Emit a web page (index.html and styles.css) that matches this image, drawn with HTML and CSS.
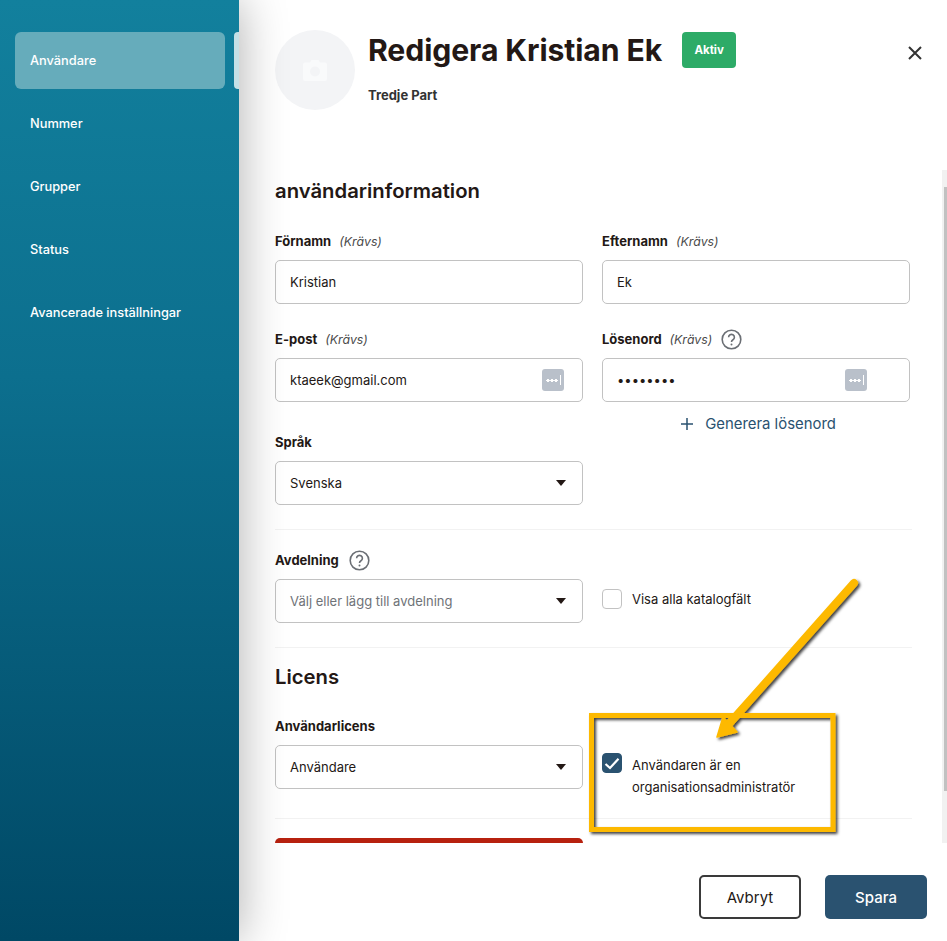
FILE: index.html
```html
<!DOCTYPE html>
<html lang="sv">
<head>
<meta charset="utf-8">
<title>Redigera Kristian Ek</title>
<link rel="stylesheet" href="styles.css">
</head>
<body>
<div class="app">
  <nav class="sidebar">
    <div class="nav-first">
      <a class="nav-item active">Användare</a>
      <span class="nav-peek"></span>
    </div>
    <a class="nav-item">Nummer</a>
    <a class="nav-item">Grupper</a>
    <a class="nav-item">Status</a>
    <a class="nav-item">Avancerade inställningar</a>
  </nav>
  <main class="panel">
    <header class="head">
      <div class="avatar">
        <svg width="24" height="21" viewBox="0 0 24 21"><path class="cam" fill-rule="evenodd" d="M7 2.5 8.5 0h7L17 2.500h5a2 2 0 0 1 2 2V19a2 2 0 0 1-2 2H2a2 2 0 0 1-2-2V4.500a2 2 0 0 1 2-2zM12 6.500a5 5 0 1 0 0 10 5 5 0 0 0 0-10z"/></svg>
      </div>
      <div class="head-text">
        <div class="title-row">
          <h1>Redigera Kristian Ek</h1>
          <span class="badge">Aktiv</span>
        </div>
        <div class="subtitle">Tredje Part</div>
      </div>
      <button class="close" aria-label="Stäng">
        <svg width="14" height="14" viewBox="0 0 14 14"><path d="M1 1 13 13M13 1 1 13" stroke="#333" stroke-width="2" fill="none"/></svg>
      </button>
    </header>

    <section class="scroll">
      <h2 class="h-info">användarinformation</h2>
      <div class="grid">
        <div class="field">
          <div class="label"><b>Förnamn</b><i>(Krävs)</i></div>
          <div class="input">Kristian</div>
        </div>
        <div class="field">
          <div class="label"><b>Efternamn</b><i>(Krävs)</i></div>
          <div class="input">Ek</div>
        </div>
        <div class="field">
          <div class="label"><b>E-post</b><i>(Krävs)</i></div>
          <div class="input has-key">ktaeek@gmail.com
            <span class="key"><span class="dots"></span><span class="bar"></span></span>
          </div>
        </div>
        <div class="field">
          <div class="label"><b>Lösenord</b><i>(Krävs)</i>
            <svg class="help" width="21" height="21" viewBox="0 0 21 21"><circle cx="10.500" cy="10.500" r="9.300" fill="none" stroke="#6b6f75" stroke-width="1.600"/><path d="M7.600 8.300a2.900 2.900 0 1 1 4.400 2.500c-1 .6-1.500 1.100-1.500 2.300" fill="none" stroke="#6b6f75" stroke-width="1.600"/><circle cx="10.500" cy="15.500" r="1" fill="#6b6f75"/></svg>
          </div>
          <div class="input has-key pw">••••••••
            <span class="key key-pw"><span class="dots"></span><span class="bar"></span></span>
          </div>
          <a class="gen"><svg width="12" height="12" viewBox="0 0 12 12"><path d="M6 0V12M0 6H12" stroke="#2a5270" stroke-width="1.500"/></svg>Generera lösenord</a>
        </div>
      </div>

      <div class="grid lang">
        <div class="field">
          <div class="label"><b>Språk</b></div>
          <div class="input select">Svenska<span class="caret"></span></div>
        </div>
      </div>

      <hr class="sep sep-a">

      <div class="grid">
        <div class="field">
          <div class="label"><b>Avdelning</b>
            <svg class="help help-dept" width="21" height="21" viewBox="0 0 21 21"><circle cx="10.500" cy="10.500" r="9.300" fill="none" stroke="#6b6f75" stroke-width="1.600"/><path d="M7.600 8.300a2.900 2.900 0 1 1 4.400 2.500c-1 .6-1.500 1.100-1.500 2.300" fill="none" stroke="#6b6f75" stroke-width="1.600"/><circle cx="10.500" cy="15.500" r="1" fill="#6b6f75"/></svg>
          </div>
          <div class="input select placeholder">Välj eller lägg till avdelning<span class="caret"></span></div>
        </div>
        <label class="check check-dept">
          <span class="box"></span>
          <span class="check-text">Visa alla katalogfält</span>
        </label>
      </div>

      <hr class="sep sep-b">

      <h2 class="h-lic">Licens</h2>
      <div class="grid">
        <div class="field">
          <div class="label"><b>Användarlicens</b></div>
          <div class="input select">Användare<span class="caret"></span></div>
        </div>
        <label class="check check-admin">
          <span class="box on">
            <svg width="16" height="13" viewBox="0 0 16 13"><path d="M1.500 7 6 11 14.500 1.800" fill="none" stroke="#fff" stroke-width="2.200"/></svg>
          </span>
          <span class="check-text">Användaren är en<br>organisationsadministratör</span>
        </label>
      </div>

      <hr class="sep sep-c">
      <div class="danger"></div>

      <div class="track"><div class="thumb"></div></div>
    </section>

    <footer class="foot">
      <button class="btn ghost">Avbryt</button>
      <button class="btn primary">Spara</button>
    </footer>
  </main>

  <svg class="annot" width="947" height="941" viewBox="0 0 947 941">
    <defs>
      <filter id="sh" x="-10%" y="-10%" width="125%" height="125%">
        <feDropShadow dx="2" dy="2" stdDeviation="1.500" flood-color="#000" flood-opacity=".75"/>
      </filter>
    </defs>
    <g filter="url(#sh)">
      <rect x="591.500" y="715.500" width="241.500" height="114" fill="none" stroke="#fdb900" stroke-width="5"/>
      <path d="M854 583 728 725" stroke="#fdb900" stroke-width="8" stroke-linecap="round" fill="none"/>
      <path d="M717 737 723 717 737 732z" fill="#fdb900" stroke="#fdb900" stroke-width="1.500" stroke-linejoin="round"/>
    </g>
  </svg>
</div>
</body>
</html>
```

FILE: styles.css
```css
* { box-sizing: border-box; }
html, body { margin: 0; height: 100%; }
body {
  font-family: Inter, "Liberation Sans", sans-serif;
  color: #231815;
  background: #fff;
  overflow: hidden;
}
.app { position: relative; display: flex; width: 947px; height: 941px; overflow: hidden; }

/* Sidebar */
.sidebar {
  position: relative;
  z-index: 1;
  flex: 0 0 239px;
  width: 239px;
  padding: 32px 0 0 15px;
  display: flex;
  flex-direction: column;
  gap: 6px;
  background: linear-gradient(180deg, #12809d 0%, #0c6f8e 40%, #004865 100%);
  box-shadow: 0 0 45px rgba(0, 0, 0, .32);
}
.nav-first { display: flex; gap: 9px; width: 224px; }
.nav-item {
  flex: 0 0 57px;
  width: 210px;
  height: 57px;
  padding: 0 0 1px 15px;
  display: flex;
  align-items: center;
  color: #fff;
  font-size: 12.800px;
  font-weight: 500;
  border-radius: 6px;
}
.nav-item.active { background: #66acbb; flex: 0 0 210px; }
.nav-peek { flex: 0 0 5px; height: 57px; background: #c4e0e6; border-radius: 4px 0 0 4px; }

/* Panel */
.panel { flex: 1; min-width: 0; display: flex; flex-direction: column; background: #fff; }
.head { position: relative; height: 170px; flex: none; padding: 30px 0 0 36px; display: flex; gap: 13px; }
.avatar {
  width: 80px; height: 80px; border-radius: 50%;
  background: #f3f4f6;
  display: flex; align-items: center; justify-content: center;
}
.cam { fill: #f9fafb; }
.head-text { display: flex; flex-direction: column; }
.title-row { display: flex; align-items: flex-start; gap: 20px; padding-top: 2px; }
h1 { margin: 0; font-size: 30.200px; line-height: 36px; font-weight: 700; letter-spacing: -.1px; }
.badge {
  width: 54px; height: 36px;
  display: flex; align-items: center; justify-content: center;
  background: #2dab67; color: #fff;
  font-size: 11.500px; font-weight: 700;
  border-radius: 4px;
}
.subtitle { margin-top: 18px; font-size: 13px; line-height: 18px; font-weight: 700; color: #333; }
.close { position: absolute; left: 669px; top: 46px; width: 14px; height: 14px; padding: 0; border: 0; background: none; display: flex; }

.scroll { position: relative; flex: 1; min-height: 0; overflow: hidden; padding: 8px 37px 0 36px; }
h2 { margin: 0; font-size: 20.300px; line-height: 26px; font-weight: 600; }
.h-info { margin-bottom: 27px; }
.grid { display: grid; grid-template-columns: 308px 308px; column-gap: 19px; row-gap: 25px; align-items: start; }
.label { display: flex; align-items: center; height: 21px; margin-bottom: 8px; padding-bottom: 1px; font-size: 13px; }
.label b { font-weight: 700; }
.label i { margin-left: 8px; font-size: 12.300px; font-weight: 400; color: #4a4a4a; }
.help { margin-left: 9px; margin-top: 1px; }
.help-dept { margin-left: 10px; }
.input {
  position: relative;
  height: 44px;
  padding: 0 14px;
  display: flex; align-items: center;
  border: 1px solid #c2c2c2;
  border-radius: 5px;
  background: #fff;
  font-size: 13px;
}
.pw { letter-spacing: 0; }
.placeholder { color: #6f7378; }
.key {
  position: absolute; left: 266px; top: 10px;
  width: 22px; height: 22px;
  border-radius: 3px;
  background: #b9c0ca;
  display: flex; align-items: center; justify-content: center; gap: 2px;
}
.key-pw { left: 242px; }
.dots {
  width: 12px; height: 3px;
  background: radial-gradient(circle, #fff 1.500px, transparent 1.600px) 0 0 / 4px 3px repeat-x;
}
.bar { width: 1px; height: 10px; background: #fff; }
.caret {
  position: absolute; right: 16px; top: 18px;
  width: 0; height: 0;
  border-left: 5.500px solid transparent;
  border-right: 5.500px solid transparent;
  border-top: 6px solid #231815;
}
.gen {
  display: flex; align-items: center; justify-content: center;
  gap: 12px;
  margin: 12px 0 0 5px;
  height: 20px;
  color: #2a5270;
  font-size: 14.900px;
}
.lang { margin-top: -2px; }
.sep { height: 1px; border: 0; margin: 0 -2px 0 0; background: #f2f2f2; }
.sep-a { margin-top: 24px; margin-bottom: 20px; }
.sep-b { margin-top: 24px; margin-bottom: 16px; }
.sep-c { margin-top: 20px; margin-bottom: 19px; }
.h-lic { margin-bottom: 26px; }
.check { display: flex; gap: 10px; font-size: 13px; }
.check-dept { margin-top: 38px; align-items: center; }
.check-admin { margin-top: 38px; align-items: flex-start; }
.box {
  flex: none;
  width: 20px; height: 20px;
  border: 1px solid #c2c2c2;
  border-radius: 4px;
  display: flex; align-items: center; justify-content: center;
}
.box.on { background: #2a5270; border-color: #2a5270; margin-top: -1px; }
.check-text { line-height: 22px; color: #231815; }
.danger { width: 308px; height: 20px; background: #b7210f; border-radius: 5px 5px 0 0; }
.track { position: absolute; right: 0; top: 0; bottom: 0; width: 5px; background: #f1f1f1; }
.thumb { width: 3px; height: 604px; margin: 17px 0 0 2px; background: #c1c1c1; }

/* Footer */
.foot { flex: none; height: 98px; padding: 32px 20px 0 0; display: flex; justify-content: flex-end; gap: 24px; background: #fff; }
.btn {
  width: 102px; height: 44px;
  border-radius: 5px;
  font-family: inherit;
  font-size: 15px;
}
.ghost { background: #fff; border: 2px solid #3a3a3a; color: #231815; }
.primary { background: #2a5270; border: 0; color: #fff; font-weight: 500; }

/* Annotation drawn over the screenshot */
.annot { position: absolute; left: 0; top: 0; z-index: 5; pointer-events: none; }
```
